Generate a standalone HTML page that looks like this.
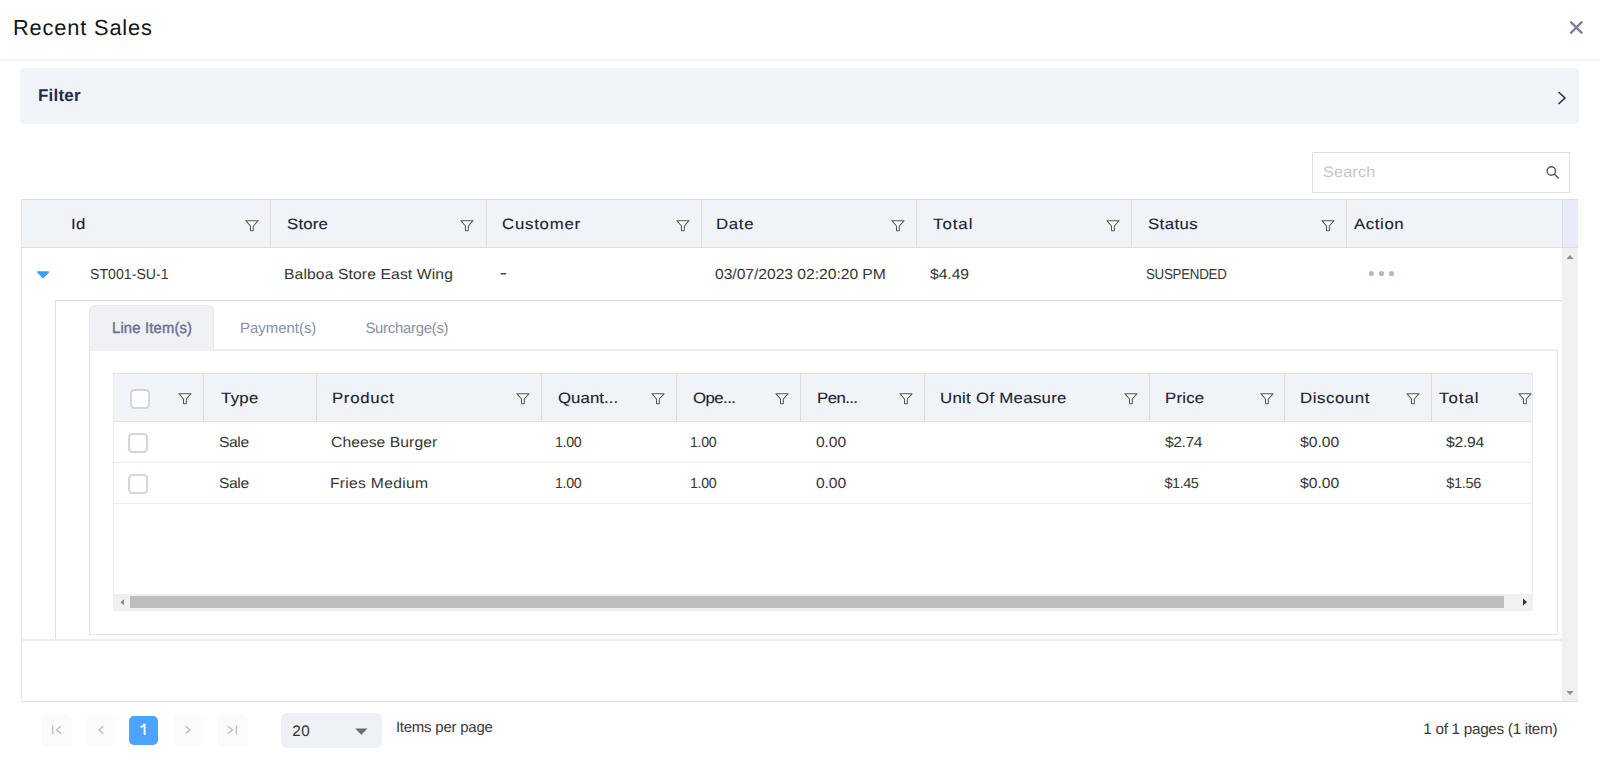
<!DOCTYPE html>
<html><head><meta charset="utf-8"><title>Recent Sales</title>
<style>
html,body{margin:0;padding:0;background:#fff;width:1600px;height:780px;overflow:hidden}
body{position:relative;font-family:"Liberation Sans",sans-serif}
body>div{position:absolute}
.t{white-space:nowrap;text-rendering:geometricPrecision}
svg{display:block}
</style></head><body>
<div class="t" style="left:13.00px;top:16.54px;font-size:21.8px;line-height:21.8px;letter-spacing:0.841px;color:#141414;font-weight:400;">Recent Sales</div>
<svg style="position:absolute;left:1569px;top:19.5px" width="15" height="15" viewBox="0 0 15 15"><path d="M1.4 1.6 L13.2 13.4 M13.2 1.6 L1.4 13.4" stroke="#7b809a" stroke-width="2.3" stroke-linecap="butt"/></svg>
<div style="left:0px;top:59px;width:1600px;height:2px;background:#f3f4f7"></div>
<div style="left:20px;top:68px;width:1559px;height:56px;background:#f1f4f7;border-radius:4px"></div>
<div class="t" style="left:38.00px;top:87.11px;font-size:17px;line-height:17px;letter-spacing:0.200px;color:#1f2d4e;font-weight:700;">Filter</div>
<svg style="position:absolute;left:1556px;top:90px" width="12" height="16" viewBox="0 0 12 16"><path d="M2.5 2 L9 8 L2.5 14" fill="none" stroke="#1c2d50" stroke-width="1.5"/></svg>
<div style="left:1312px;top:152px;width:258px;height:41px;border:1px solid #e0e0e0;box-sizing:border-box;background:#fff"></div>
<div class="t" style="left:1322.80px;top:164.98px;font-size:15.26px;line-height:15.26px;letter-spacing:0.189px;color:#c6c6c6;font-weight:400;;transform:scaleX(1.06);transform-origin:0 0">Search</div>
<svg style="position:absolute;left:1544px;top:164px" width="18" height="18" viewBox="0 0 18 18"><circle cx="7.3" cy="7" r="4.2" fill="none" stroke="#555" stroke-width="1.4"/><path d="M10.3 10 L14.8 14.6" stroke="#555" stroke-width="1.5"/></svg>
<div style="left:21px;top:199px;width:1557px;height:503px;border:1px solid #dedede;border-left-color:#ebebeb;border-right:none;border-bottom-color:#e0e0e0;box-sizing:border-box;background:#fff"></div>
<div style="left:22px;top:200px;width:1540px;height:47px;background:#f1f4f7"></div>
<div style="left:1562px;top:200px;width:16px;height:47px;background:#e8ebf8"></div>
<div style="left:22px;top:247px;width:1556px;height:1px;background:#dedede"></div>
<div style="left:270px;top:200px;width:1px;height:47px;background:#dedede"></div>
<div style="left:486px;top:200px;width:1px;height:47px;background:#dedede"></div>
<div style="left:701px;top:200px;width:1px;height:47px;background:#dedede"></div>
<div style="left:916px;top:200px;width:1px;height:47px;background:#dedede"></div>
<div style="left:1131px;top:200px;width:1px;height:47px;background:#dedede"></div>
<div style="left:1346px;top:200px;width:1px;height:47px;background:#dedede"></div>
<div style="left:1562px;top:200px;width:1px;height:47px;background:#dedede"></div>
<div class="t" style="left:71.10px;top:217.00px;font-size:15.0px;line-height:15.0px;letter-spacing:0.379px;color:#1c1d36;font-weight:400;-webkit-text-stroke:0.12px #1c1d36;transform:scaleX(1.12);transform-origin:0 0">Id</div>
<div class="t" style="left:286.50px;top:217.00px;font-size:15.0px;line-height:15.0px;letter-spacing:0.157px;color:#1c1d36;font-weight:400;-webkit-text-stroke:0.12px #1c1d36;transform:scaleX(1.12);transform-origin:0 0">Store</div>
<div class="t" style="left:502.10px;top:217.00px;font-size:15.0px;line-height:15.0px;letter-spacing:0.674px;color:#1c1d36;font-weight:400;-webkit-text-stroke:0.12px #1c1d36;transform:scaleX(1.12);transform-origin:0 0">Customer</div>
<div class="t" style="left:716.40px;top:217.00px;font-size:15.0px;line-height:15.0px;letter-spacing:0.610px;color:#1c1d36;font-weight:400;-webkit-text-stroke:0.12px #1c1d36;transform:scaleX(1.12);transform-origin:0 0">Date</div>
<div class="t" style="left:933.20px;top:217.00px;font-size:15.0px;line-height:15.0px;letter-spacing:0.880px;color:#1c1d36;font-weight:400;-webkit-text-stroke:0.12px #1c1d36;transform:scaleX(1.12);transform-origin:0 0">Total</div>
<div class="t" style="left:1148.20px;top:217.00px;font-size:15.0px;line-height:15.0px;letter-spacing:0.360px;color:#1c1d36;font-weight:400;-webkit-text-stroke:0.12px #1c1d36;transform:scaleX(1.12);transform-origin:0 0">Status</div>
<div class="t" style="left:1353.50px;top:217.00px;font-size:15.0px;line-height:15.0px;letter-spacing:0.529px;color:#1c1d36;font-weight:400;-webkit-text-stroke:0.12px #1c1d36;transform:scaleX(1.12);transform-origin:0 0">Action</div>
<svg style="position:absolute;left:245px;top:219.5px" width="14" height="12" viewBox="0 0 14 12"><path d="M0.9 0.7 H13.1 L8.3 6.0 V10.2 Q8.3 10.7 7.8 10.7 H6.0 Q5.5 10.7 5.5 10.2 V6.0 Z" fill="#fbfcfd" stroke="#555555" stroke-width="1.05" stroke-linejoin="round"/></svg>
<svg style="position:absolute;left:460px;top:219.5px" width="14" height="12" viewBox="0 0 14 12"><path d="M0.9 0.7 H13.1 L8.3 6.0 V10.2 Q8.3 10.7 7.8 10.7 H6.0 Q5.5 10.7 5.5 10.2 V6.0 Z" fill="#fbfcfd" stroke="#555555" stroke-width="1.05" stroke-linejoin="round"/></svg>
<svg style="position:absolute;left:675.5px;top:219.5px" width="14" height="12" viewBox="0 0 14 12"><path d="M0.9 0.7 H13.1 L8.3 6.0 V10.2 Q8.3 10.7 7.8 10.7 H6.0 Q5.5 10.7 5.5 10.2 V6.0 Z" fill="#fbfcfd" stroke="#555555" stroke-width="1.05" stroke-linejoin="round"/></svg>
<svg style="position:absolute;left:890.5px;top:219.5px" width="14" height="12" viewBox="0 0 14 12"><path d="M0.9 0.7 H13.1 L8.3 6.0 V10.2 Q8.3 10.7 7.8 10.7 H6.0 Q5.5 10.7 5.5 10.2 V6.0 Z" fill="#fbfcfd" stroke="#555555" stroke-width="1.05" stroke-linejoin="round"/></svg>
<svg style="position:absolute;left:1106px;top:219.5px" width="14" height="12" viewBox="0 0 14 12"><path d="M0.9 0.7 H13.1 L8.3 6.0 V10.2 Q8.3 10.7 7.8 10.7 H6.0 Q5.5 10.7 5.5 10.2 V6.0 Z" fill="#fbfcfd" stroke="#555555" stroke-width="1.05" stroke-linejoin="round"/></svg>
<svg style="position:absolute;left:1321px;top:219.5px" width="14" height="12" viewBox="0 0 14 12"><path d="M0.9 0.7 H13.1 L8.3 6.0 V10.2 Q8.3 10.7 7.8 10.7 H6.0 Q5.5 10.7 5.5 10.2 V6.0 Z" fill="#fbfcfd" stroke="#555555" stroke-width="1.05" stroke-linejoin="round"/></svg>
<svg style="position:absolute;left:36px;top:270px" width="14" height="10" viewBox="0 0 14 10"><path d="M1.7 2 H12.5 L7.1 7.6 Z" fill="#3d9bff" stroke="#3d9bff" stroke-width="1.3" stroke-linejoin="round"/></svg>
<div class="t" style="left:90.00px;top:268.20px;font-size:14.53px;line-height:14.53px;letter-spacing:0.044px;color:#363636;font-weight:400;;transform:scaleX(0.97);transform-origin:0 0">ST001-SU-1</div>
<div class="t" style="left:284.00px;top:268.20px;font-size:14.53px;line-height:14.53px;letter-spacing:0.108px;color:#363636;font-weight:400;;transform:scaleX(1.08);transform-origin:0 0">Balboa Store East Wing</div>
<svg style="position:absolute;left:498px;top:270px" width="12" height="8" viewBox="0 0 12 8"><rect x="2.6" y="3.05" width="5.7" height="1.5" rx="0.6" fill="#4a4a4a"/></svg>
<div class="t" style="left:715.00px;top:268.20px;font-size:14.53px;line-height:14.53px;letter-spacing:-0.038px;color:#363636;font-weight:400;;transform:scaleX(1.08);transform-origin:0 0">03/07/2023 02:20:20 PM</div>
<div class="t" style="left:930.00px;top:268.20px;font-size:14.53px;line-height:14.53px;letter-spacing:-0.044px;color:#363636;font-weight:400;;transform:scaleX(1.08);transform-origin:0 0">$4.49</div>
<div class="t" style="left:1145.60px;top:268.20px;font-size:14.53px;line-height:14.53px;letter-spacing:-0.309px;color:#363636;font-weight:400;;transform:scaleX(0.92);transform-origin:0 0">SUSPENDED</div>
<svg style="position:absolute;left:1360px;top:263px" width="40" height="20" viewBox="0 0 40 20"><circle cx="11.4" cy="10.5" r="2.55" fill="#b5b3c6"/><circle cx="21.5" cy="10.5" r="2.55" fill="#b5b3c6"/><circle cx="31.5" cy="10.5" r="2.55" fill="#b5b3c6"/></svg>
<div style="left:55px;top:300px;width:1507px;height:1px;background:#dedede"></div>
<div style="left:55px;top:300px;width:1px;height:339px;background:#dedede"></div>
<div style="left:22px;top:639px;width:1540px;height:2px;background:#ededed"></div>
<div style="left:89px;top:349px;width:1469px;height:286px;border:1px solid #dfe3ea;border-top:2px solid #eceef3;box-sizing:border-box"></div>
<div style="left:89px;top:305px;width:125px;height:46px;background:#f0f1f5;border:1px solid #e8e9ef;border-bottom:none;border-radius:6px 6px 0 0;box-sizing:border-box"></div>
<div class="t" style="left:112.20px;top:320.88px;font-size:15.26px;line-height:15.26px;letter-spacing:0.181px;color:#6c7190;font-weight:400;-webkit-text-stroke:0.45px #6c7190;transform:scaleX(0.97);transform-origin:0 0">Line Item(s)</div>
<div class="t" style="left:240.00px;top:321.62px;font-size:14.97px;line-height:14.97px;letter-spacing:-0.020px;color:#8b90a7;font-weight:400;">Payment(s)</div>
<div class="t" style="left:365.40px;top:321.62px;font-size:14.97px;line-height:14.97px;letter-spacing:-0.304px;color:#8b90a7;font-weight:400;">Surcharge(s)</div>
<div style="left:113px;top:373px;width:1420px;height:238px;border:1px solid #e2e2e2;border-left-color:#eeeeee;border-bottom:none;border-right:none;box-sizing:border-box"></div>
<div style="left:1532px;top:373px;width:1px;height:221px;background:#ececec"></div>
<div style="left:114px;top:374px;width:1418px;height:47px;background:#f1f4f7"></div>
<div style="left:114px;top:421px;width:1418px;height:1px;background:#e2e2e2"></div>
<div style="left:203px;top:374px;width:1px;height:47px;background:#dcdcdc"></div>
<div style="left:316px;top:374px;width:1px;height:47px;background:#dcdcdc"></div>
<div style="left:541px;top:374px;width:1px;height:47px;background:#dcdcdc"></div>
<div style="left:676px;top:374px;width:1px;height:47px;background:#dcdcdc"></div>
<div style="left:800px;top:374px;width:1px;height:47px;background:#dcdcdc"></div>
<div style="left:924px;top:374px;width:1px;height:47px;background:#dcdcdc"></div>
<div style="left:1149px;top:374px;width:1px;height:47px;background:#dcdcdc"></div>
<div style="left:1284px;top:374px;width:1px;height:47px;background:#dcdcdc"></div>
<div style="left:1431px;top:374px;width:1px;height:47px;background:#dcdcdc"></div>
<div style="left:130px;top:388.5px;width:20px;height:20px;border:2px solid #d3d3e1;border-radius:4.5px;background:#fff;box-sizing:border-box"></div>
<svg style="position:absolute;left:178px;top:392.5px" width="14" height="12" viewBox="0 0 14 12"><path d="M0.9 0.7 H13.1 L8.3 6.0 V10.2 Q8.3 10.7 7.8 10.7 H6.0 Q5.5 10.7 5.5 10.2 V6.0 Z" fill="#fbfcfd" stroke="#555555" stroke-width="1.05" stroke-linejoin="round"/></svg>
<div class="t" style="left:220.80px;top:390.50px;font-size:15.0px;line-height:15.0px;letter-spacing:0.276px;color:#1c1d36;font-weight:400;-webkit-text-stroke:0.12px #1c1d36;transform:scaleX(1.12);transform-origin:0 0">Type</div>
<div class="t" style="left:332.25px;top:390.50px;font-size:15.0px;line-height:15.0px;letter-spacing:0.592px;color:#1c1d36;font-weight:400;-webkit-text-stroke:0.12px #1c1d36;transform:scaleX(1.12);transform-origin:0 0">Product</div>
<div class="t" style="left:558.25px;top:390.50px;font-size:15.0px;line-height:15.0px;letter-spacing:0.050px;color:#1c1d36;font-weight:400;-webkit-text-stroke:0.12px #1c1d36;transform:scaleX(1.12);transform-origin:0 0">Quant...</div>
<div class="t" style="left:693.25px;top:390.50px;font-size:15.0px;line-height:15.0px;letter-spacing:-0.493px;color:#1c1d36;font-weight:400;-webkit-text-stroke:0.12px #1c1d36;transform:scaleX(1.12);transform-origin:0 0">Ope...</div>
<div class="t" style="left:816.50px;top:390.50px;font-size:15.0px;line-height:15.0px;letter-spacing:-0.514px;color:#1c1d36;font-weight:400;-webkit-text-stroke:0.12px #1c1d36;transform:scaleX(1.12);transform-origin:0 0">Pen...</div>
<div class="t" style="left:940.25px;top:390.50px;font-size:15.0px;line-height:15.0px;letter-spacing:0.264px;color:#1c1d36;font-weight:400;-webkit-text-stroke:0.12px #1c1d36;transform:scaleX(1.12);transform-origin:0 0">Unit Of Measure</div>
<div class="t" style="left:1165.25px;top:390.50px;font-size:15.0px;line-height:15.0px;letter-spacing:0.184px;color:#1c1d36;font-weight:400;-webkit-text-stroke:0.12px #1c1d36;transform:scaleX(1.12);transform-origin:0 0">Price</div>
<div class="t" style="left:1300.25px;top:390.50px;font-size:15.0px;line-height:15.0px;letter-spacing:0.509px;color:#1c1d36;font-weight:400;-webkit-text-stroke:0.12px #1c1d36;transform:scaleX(1.12);transform-origin:0 0">Discount</div>
<div class="t" style="left:1438.75px;top:390.50px;font-size:15.0px;line-height:15.0px;letter-spacing:0.907px;color:#1c1d36;font-weight:400;-webkit-text-stroke:0.12px #1c1d36;transform:scaleX(1.12);transform-origin:0 0">Total</div>
<svg style="position:absolute;left:516px;top:392.5px" width="14" height="12" viewBox="0 0 14 12"><path d="M0.9 0.7 H13.1 L8.3 6.0 V10.2 Q8.3 10.7 7.8 10.7 H6.0 Q5.5 10.7 5.5 10.2 V6.0 Z" fill="#fbfcfd" stroke="#555555" stroke-width="1.05" stroke-linejoin="round"/></svg>
<svg style="position:absolute;left:651px;top:392.5px" width="14" height="12" viewBox="0 0 14 12"><path d="M0.9 0.7 H13.1 L8.3 6.0 V10.2 Q8.3 10.7 7.8 10.7 H6.0 Q5.5 10.7 5.5 10.2 V6.0 Z" fill="#fbfcfd" stroke="#555555" stroke-width="1.05" stroke-linejoin="round"/></svg>
<svg style="position:absolute;left:775px;top:392.5px" width="14" height="12" viewBox="0 0 14 12"><path d="M0.9 0.7 H13.1 L8.3 6.0 V10.2 Q8.3 10.7 7.8 10.7 H6.0 Q5.5 10.7 5.5 10.2 V6.0 Z" fill="#fbfcfd" stroke="#555555" stroke-width="1.05" stroke-linejoin="round"/></svg>
<svg style="position:absolute;left:899px;top:392.5px" width="14" height="12" viewBox="0 0 14 12"><path d="M0.9 0.7 H13.1 L8.3 6.0 V10.2 Q8.3 10.7 7.8 10.7 H6.0 Q5.5 10.7 5.5 10.2 V6.0 Z" fill="#fbfcfd" stroke="#555555" stroke-width="1.05" stroke-linejoin="round"/></svg>
<svg style="position:absolute;left:1124px;top:392.5px" width="14" height="12" viewBox="0 0 14 12"><path d="M0.9 0.7 H13.1 L8.3 6.0 V10.2 Q8.3 10.7 7.8 10.7 H6.0 Q5.5 10.7 5.5 10.2 V6.0 Z" fill="#fbfcfd" stroke="#555555" stroke-width="1.05" stroke-linejoin="round"/></svg>
<svg style="position:absolute;left:1259.5px;top:392.5px" width="14" height="12" viewBox="0 0 14 12"><path d="M0.9 0.7 H13.1 L8.3 6.0 V10.2 Q8.3 10.7 7.8 10.7 H6.0 Q5.5 10.7 5.5 10.2 V6.0 Z" fill="#fbfcfd" stroke="#555555" stroke-width="1.05" stroke-linejoin="round"/></svg>
<svg style="position:absolute;left:1405.5px;top:392.5px" width="14" height="12" viewBox="0 0 14 12"><path d="M0.9 0.7 H13.1 L8.3 6.0 V10.2 Q8.3 10.7 7.8 10.7 H6.0 Q5.5 10.7 5.5 10.2 V6.0 Z" fill="#fbfcfd" stroke="#555555" stroke-width="1.05" stroke-linejoin="round"/></svg>
<svg style="position:absolute;left:1518px;top:392.5px" width="14" height="12" viewBox="0 0 14 12"><path d="M0.9 0.7 H13.1 L8.3 6.0 V10.2 Q8.3 10.7 7.8 10.7 H6.0 Q5.5 10.7 5.5 10.2 V6.0 Z" fill="#fbfcfd" stroke="#555555" stroke-width="1.05" stroke-linejoin="round"/></svg>
<div style="left:128px;top:433.0px;width:20px;height:20px;border:2px solid #d3d3e1;border-radius:4.5px;background:#fff;box-sizing:border-box"></div>
<div class="t" style="left:219.00px;top:435.50px;font-size:14.53px;line-height:14.53px;letter-spacing:-0.378px;color:#363636;font-weight:400;;transform:scaleX(1.08);transform-origin:0 0">Sale</div>
<div class="t" style="left:331.25px;top:435.50px;font-size:14.53px;line-height:14.53px;letter-spacing:0.056px;color:#363636;font-weight:400;;transform:scaleX(1.08);transform-origin:0 0">Cheese Burger</div>
<div class="t" style="left:555.25px;top:435.50px;font-size:14.53px;line-height:14.53px;letter-spacing:-0.360px;color:#363636;font-weight:400;;transform:scaleX(0.98);transform-origin:0 0">1.00</div>
<div class="t" style="left:690.25px;top:435.50px;font-size:14.53px;line-height:14.53px;letter-spacing:-0.360px;color:#363636;font-weight:400;;transform:scaleX(0.98);transform-origin:0 0">1.00</div>
<div class="t" style="left:815.75px;top:435.50px;font-size:14.53px;line-height:14.53px;letter-spacing:-0.127px;color:#363636;font-weight:400;;transform:scaleX(1.08);transform-origin:0 0">0.00</div>
<div class="t" style="left:1164.50px;top:435.50px;font-size:14.53px;line-height:14.53px;letter-spacing:-0.424px;color:#363636;font-weight:400;;transform:scaleX(1.08);transform-origin:0 0">$2.74</div>
<div class="t" style="left:1299.50px;top:435.50px;font-size:14.53px;line-height:14.53px;letter-spacing:0.016px;color:#363636;font-weight:400;;transform:scaleX(1.08);transform-origin:0 0">$0.00</div>
<div class="t" style="left:1446.25px;top:435.50px;font-size:14.53px;line-height:14.53px;letter-spacing:-0.234px;color:#363636;font-weight:400;;transform:scaleX(1.08);transform-origin:0 0">$2.94</div>
<div style="left:114px;top:462px;width:1418px;height:1px;background:#e8eaef"></div>
<div style="left:128px;top:474.4px;width:20px;height:20px;border:2px solid #d3d3e1;border-radius:4.5px;background:#fff;box-sizing:border-box"></div>
<div class="t" style="left:219.00px;top:476.50px;font-size:14.53px;line-height:14.53px;letter-spacing:-0.378px;color:#363636;font-weight:400;;transform:scaleX(1.08);transform-origin:0 0">Sale</div>
<div class="t" style="left:330.25px;top:476.50px;font-size:14.53px;line-height:14.53px;letter-spacing:0.258px;color:#363636;font-weight:400;;transform:scaleX(1.08);transform-origin:0 0">Fries Medium</div>
<div class="t" style="left:555.25px;top:476.50px;font-size:14.53px;line-height:14.53px;letter-spacing:-0.360px;color:#363636;font-weight:400;;transform:scaleX(0.98);transform-origin:0 0">1.00</div>
<div class="t" style="left:690.25px;top:476.50px;font-size:14.53px;line-height:14.53px;letter-spacing:-0.360px;color:#363636;font-weight:400;;transform:scaleX(0.98);transform-origin:0 0">1.00</div>
<div class="t" style="left:815.75px;top:476.50px;font-size:14.53px;line-height:14.53px;letter-spacing:-0.127px;color:#363636;font-weight:400;;transform:scaleX(1.08);transform-origin:0 0">0.00</div>
<div class="t" style="left:1164.50px;top:476.50px;font-size:14.53px;line-height:14.53px;letter-spacing:-0.500px;color:#363636;font-weight:400;">$1.45</div>
<div class="t" style="left:1299.50px;top:476.50px;font-size:14.53px;line-height:14.53px;letter-spacing:0.016px;color:#363636;font-weight:400;;transform:scaleX(1.08);transform-origin:0 0">$0.00</div>
<div class="t" style="left:1446.25px;top:476.50px;font-size:14.53px;line-height:14.53px;letter-spacing:-0.300px;color:#363636;font-weight:400;">$1.56</div>
<div style="left:114px;top:503px;width:1418px;height:1px;background:#e8eaef"></div>
<div style="left:114px;top:594px;width:1419px;height:17px;background:#f0f0f0"></div>
<div style="left:130px;top:596px;width:1374px;height:12px;background:#bdbdbd"></div>
<svg style="position:absolute;left:119.5px;top:598.7px" width="6" height="8" viewBox="0 0 6 8"><path d="M4 0.3 V6.2 L0.4 3.25 Z" fill="#8a8a8a"/></svg>
<svg style="position:absolute;left:1522px;top:598px" width="6" height="8" viewBox="0 0 6 8"><path d="M1 0.5 V7.5 L5 4 Z" fill="#333"/></svg>
<div style="left:1562px;top:248px;width:16px;height:453px;background:#f0f0f0"></div>
<svg style="position:absolute;left:1566px;top:253.5px" width="8" height="6" viewBox="0 0 8 6"><path d="M0.5 5 H7.5 L4 1 Z" fill="#8f8f8f"/></svg>
<svg style="position:absolute;left:1566px;top:690px" width="8" height="6" viewBox="0 0 8 6"><path d="M0.5 1 H7.5 L4 5 Z" fill="#8f8f8f"/></svg>
<div style="left:41.2px;top:714.5px;width:30.5px;height:31px;background:#fbfbfb;border-radius:5px"></div>
<div style="left:85.7px;top:714.5px;width:30.5px;height:31px;background:#fbfbfb;border-radius:5px"></div>
<div style="left:173px;top:714.5px;width:30.5px;height:31px;background:#fbfbfb;border-radius:5px"></div>
<div style="left:217px;top:714.5px;width:30.5px;height:31px;background:#fbfbfb;border-radius:5px"></div>
<div style="left:128.8px;top:716px;width:29.4px;height:29px;background:#4da3ff;border-radius:5px"></div>
<svg style="position:absolute;left:50px;top:723px" width="14" height="14" viewBox="0 0 14 14"><path d="M2.6 2.2 V11.5 M10.9 3.2 L6.5 6.9 L10.9 10.6" fill="none" stroke="#c2c2c2" stroke-width="1.5"/></svg>
<svg style="position:absolute;left:94px;top:723px" width="14" height="14" viewBox="0 0 14 14"><path d="M9.3 3.2 L4.9 6.9 L9.3 10.6" fill="none" stroke="#c2c2c2" stroke-width="1.5"/></svg>
<svg style="position:absolute;left:181px;top:723px" width="14" height="14" viewBox="0 0 14 14"><path d="M4.7 3.2 L9.1 6.9 L4.7 10.6" fill="none" stroke="#c2c2c2" stroke-width="1.5"/></svg>
<svg style="position:absolute;left:225px;top:723px" width="14" height="14" viewBox="0 0 14 14"><path d="M11.4 2.2 V11.5 M3.1 3.2 L7.5 6.9 L3.1 10.6" fill="none" stroke="#c2c2c2" stroke-width="1.5"/></svg>
<svg style="position:absolute;left:136px;top:720px" width="14" height="18" viewBox="0 0 14 18"><path d="M8.6 3.8 V15.1 M8.6 4.0 Q7.2 6.2 4.6 7.2" fill="none" stroke="#fff" stroke-width="1.9" stroke-linecap="butt"/></svg>
<div style="left:281.2px;top:712.7px;width:101.2px;height:35.6px;background:#edf1f6;border-radius:6px"></div>
<div class="t" style="left:292.20px;top:723.78px;font-size:15.26px;line-height:15.26px;letter-spacing:0.560px;color:#333;font-weight:400;">20</div>
<svg style="position:absolute;left:355px;top:728px" width="13" height="7" viewBox="0 0 13 7"><path d="M0.2 0.5 H12.5 L6.35 6.8 Z" fill="#6b6b6b"/></svg>
<div class="t" style="left:395.90px;top:720.62px;font-size:14.97px;line-height:14.97px;letter-spacing:-0.223px;color:#3a3a3a;font-weight:400;">Items per page</div>
<div class="t" style="left:1423.30px;top:722.08px;font-size:15.26px;line-height:15.26px;letter-spacing:-0.280px;color:#3a3a3a;font-weight:400;">1 of 1 pages (1 item)</div>
</body></html>
